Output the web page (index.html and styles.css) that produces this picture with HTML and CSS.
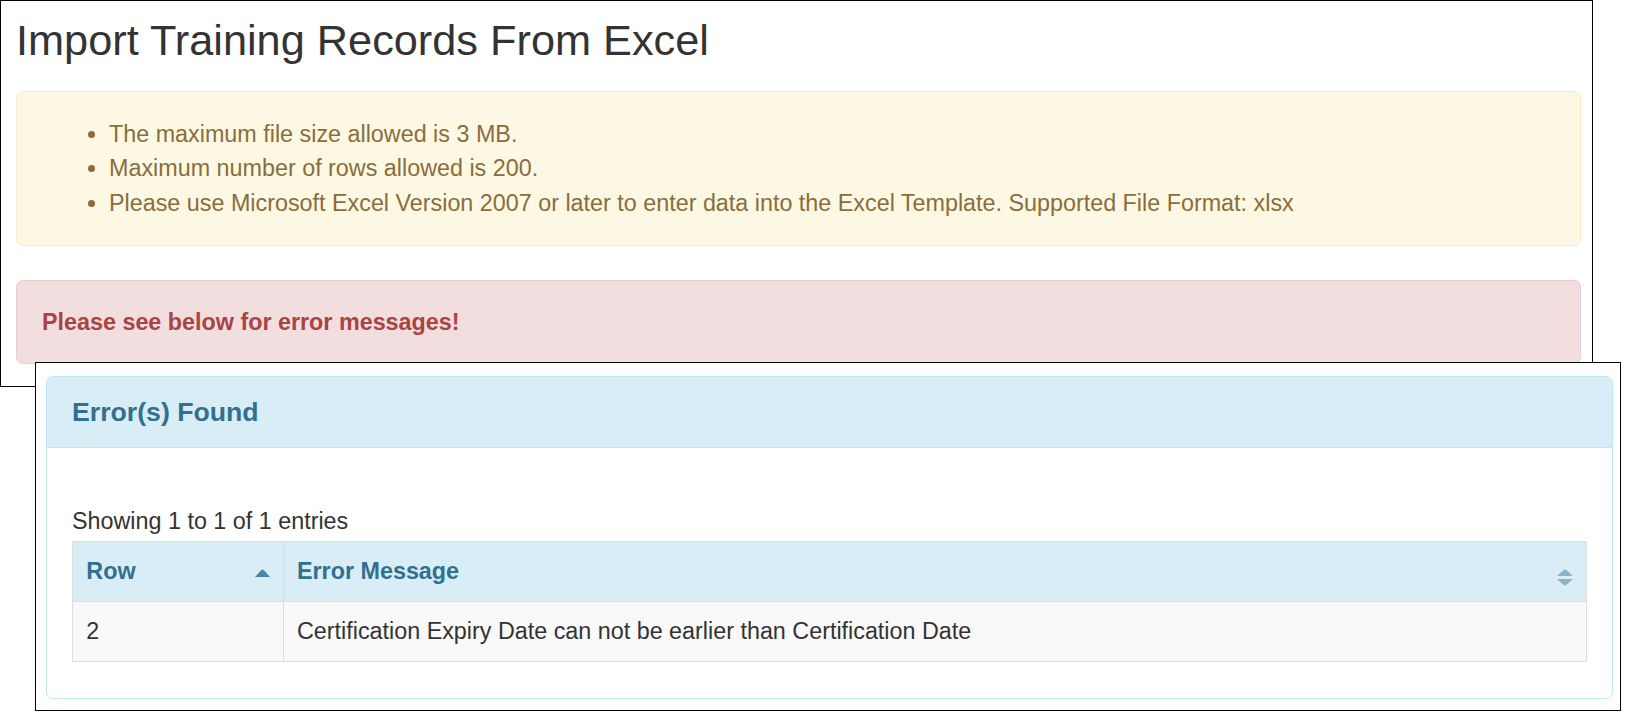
FILE: index.html
```html
<!DOCTYPE html>
<html lang="en">
<head>
<meta charset="utf-8">
<title>Import Training Records From Excel</title>
<link rel="stylesheet" href="styles.css">
</head>
<body>
<div class="desk">
  <section class="screen screen-top">
    <h1 class="page-title">Import Training Records From Excel</h1>
    <div class="alert alert-warning">
      <ul class="rules">
        <li>The maximum file size allowed is 3 MB.</li>
        <li>Maximum number of rows allowed is 200.</li>
        <li>Please use Microsoft Excel Version 2007 or later to enter data into the Excel Template. Supported File Format: xlsx</li>
      </ul>
    </div>
    <div class="alert alert-danger">
      <strong>Please see below for error messages!</strong>
    </div>
  </section>

  <section class="screen screen-bottom">
    <div class="panel">
      <div class="panel-heading">Error(s) Found</div>
      <div class="panel-body">
        <div class="info">Showing 1 to 1 of 1 entries</div>
        <table class="errors">
          <thead>
            <tr>
              <th class="col-row">
                <div class="th-inner">
                  <span>Row</span>
                  <svg class="sort sort-asc" width="15" height="8" viewBox="0 0 15 8" aria-hidden="true"><path d="M0 8 L6.3 1 Q7.5 -0.2 8.7 1 L15 8 Z" fill="#4a86a9"/></svg>
                </div>
              </th>
              <th>
                <div class="th-inner">
                  <span>Error Message</span>
                  <svg class="sort sort-both" width="16" height="18" viewBox="0 0 16 18" aria-hidden="true"><path d="M0 7 L7 0.8 Q8 0 9 0.8 L16 7 Z" fill="#8db3c8"/><path d="M0 10 L16 10 L9 16.2 Q8 17 7 16.2 Z" fill="#8db3c8"/></svg>
                </div>
              </th>
            </tr>
          </thead>
          <tbody>
            <tr class="odd">
              <td>2</td>
              <td>Certification Expiry Date can not be earlier than Certification Date</td>
            </tr>
          </tbody>
        </table>
      </div>
    </div>
  </section>
</div>
</body>
</html>
```

FILE: styles.css
```css
html, body {
  margin: 0;
  padding: 0;
  background: #fff;
}

body {
  font-family: "Liberation Sans", Arial, Helvetica, sans-serif;
  font-size: 23.33px;
  line-height: 33.33px;
  color: #333;
}

.desk {
  position: relative;
  width: 1626px;
  height: 715px;
}

.screen {
  box-sizing: border-box;
  border: 1px solid #000;
  background: #fff;
}

.screen-top {
  width: 1593px;
  height: 387px;
  padding: 16px 11px 0 15px;
  overflow: hidden;
}

.page-title {
  margin: 0 0 26.7px 0;
  font-size: 43.3px;
  line-height: 47.3px;
  font-weight: normal;
  color: #333;
}

.alert {
  border: 1px solid transparent;
  border-radius: 6.67px;
  padding: 25px;
}

.alert-warning {
  background: #fcf8e3;
  border-color: #faebcc;
  color: #8a6d3b;
  margin-bottom: 34px;
}

.rules {
  margin: 0;
  padding-left: 67px;
}

.rules li {
  line-height: 34.3px;
}

.alert-danger {
  background: #f2dede;
  border-color: #ebccd1;
  color: #a94442;
  padding-top: 24px;
  padding-bottom: 24px;
  line-height: 34px;
}

.alert-danger strong {
  font-weight: bold;
}

.screen-bottom {
  position: absolute;
  left: 35px;
  top: 362px;
  width: 1586px;
  height: 349px;
  padding: 13px 7px 10px 10px;
}

.panel {
  border: 1px solid #bce8f1;
  border-radius: 6.67px;
  background: #fff;
}

.panel-heading {
  background: #d9edf7;
  border-bottom: 1px solid #bce8f1;
  border-radius: 5.67px 5.67px 0 0;
  color: #31708f;
  font-size: 26.67px;
  font-weight: bold;
  line-height: 30px;
  padding: 20px 25px;
}

.panel-body {
  padding: 57px 25px 36px 25px;
}

.info {
  line-height: 33.33px;
  margin-bottom: 2.67px;
}

.errors {
  width: 100%;
  border-collapse: collapse;
  border: 1px solid #ddd;
}

.errors th,
.errors td {
  border: 1px solid #ddd;
  padding: 13px 13.33px;
  line-height: 33px;
  text-align: left;
  vertical-align: top;
}

.errors thead th {
  background: #d9edf7;
  color: #31708f;
  font-weight: bold;
}

.errors .col-row {
  width: 183px;
}

.th-inner {
  display: flex;
  justify-content: space-between;
  align-items: flex-start;
}

.sort {
  display: block;
  flex: none;
  margin-top: 14px;
}

.sort-asc {
  margin-right: -1px;
}

.errors tbody tr.odd td {
  background: #f9f9f9;
}
```
